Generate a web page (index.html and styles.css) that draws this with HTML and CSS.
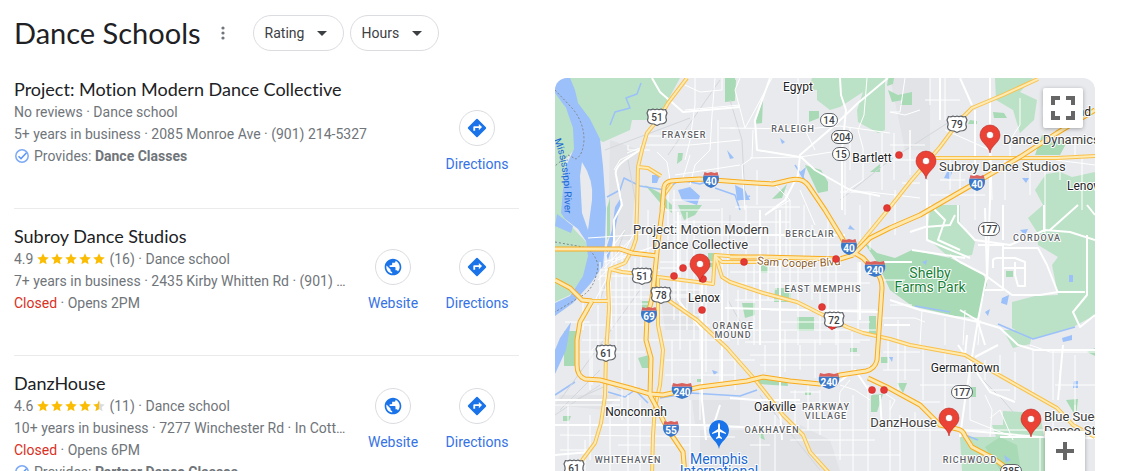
FILE: index.html
```html
<!DOCTYPE html>
<html lang="en">
<head>
	<meta charset="UTF-8">
	<title>Dance Schools</title>
	<link rel="stylesheet" href="styles.css">
</head>
<body>

<!-- shared icons -->
<svg class="sprite" aria-hidden="true">
	<symbol id="i-web" viewBox="0 0 24 24"><path d="M12 2C6.500 2 2 6.500 2 12s4.500 10 10 10 10-4.500 10-10S17.500 2 12 2zm-1 17.900C7.100 19.400 4 16.100 4 12c0-.6.100-1.200.2-1.800L9 15v1c0 1.100.9 2 2 2v1.900zm6.900-2.500c-.3-.8-1-1.400-1.900-1.400h-1v-3c0-.6-.4-1-1-1H8v-2h2c.6 0 1-.4 1-1V7h2c1.100 0 2-.9 2-2v-.4c2.900 1.200 5 4.100 5 7.400 0 2.100-.8 4-2.100 5.400z"/></symbol>
	<symbol id="i-dir" viewBox="0 0 24 24"><path d="M21.700 11.300l-9-9a1 1 0 0 0-1.400 0l-9 9a1 1 0 0 0 0 1.400l9 9a1 1 0 0 0 1.400 0l9-9a1 1 0 0 0 0-1.400zM14 14.500V12h-4v3H8v-4c0-.6.400-1 1-1h5V7.500l3.500 3.500-3.500 3.500z"/></symbol>
	<symbol id="i-check" viewBox="0 0 16 16"><circle cx="8" cy="8" r="6.200" fill="none" stroke="#7baaf7" stroke-width="1.500"/><path d="M4.500 8.200l2.500 2.400 5.500-5.800" fill="none" stroke="#5e97f6" stroke-width="1.500"/></symbol>
	<symbol id="i-star" viewBox="0 0 12 12"><path d="M6 .3l1.700 3.800 4.100.4-3.100 2.700.9 4.100L6 9.200l-3.600 2.100.9-4.100L.2 4.500l4.100-.4z"/></symbol>
	<symbol id="i-half" viewBox="0 0 12 12"><path d="M6 .3l1.700 3.800 4.100.4-3.100 2.700.9 4.100L6 9.200z" fill="#dadce0"/><path d="M6 .3v8.900l-3.600 2.100.9-4.100L.2 4.500l4.100-.4z"/></symbol>
</svg>

<div class="page">
	<header class="head">
		<h1>Dance Schools</h1>
		<button class="more" aria-label="More options">
			<svg width="4" height="14" viewBox="0 0 4 14"><circle cx="2" cy="2" r="1.600"/><circle cx="2" cy="7" r="1.600"/><circle cx="2" cy="12" r="1.600"/></svg>
		</button>
		<div class="filter">
			<select aria-label="Rating"><option>Rating</option></select>
			<svg width="10" height="5" viewBox="0 0 10 5"><path d="M0 0h10L5 5z"/></svg>
		</div>
		<div class="filter">
			<select aria-label="Hours"><option>Hours</option></select>
			<svg width="10" height="5" viewBox="0 0 10 5"><path d="M0 0h10L5 5z"/></svg>
		</div>
	</header>

	<main class="cols">
		<div class="list">
			<article class="item">
				<div class="info">
					<h2>Project: Motion Modern Dance Collective</h2>
					<p>No reviews · Dance school</p>
					<p>5+ years in business · 2085 Monroe Ave · (901) 214-5327</p>
					<p class="provides"><svg width="16" height="16"><use href="#i-check"/></svg><span>Provides: <b>Dance Classes</b></span></p>
				</div>
				<nav class="acts low">
					<a href="#"><span class="ring"><svg width="22" height="22"><use href="#i-dir"/></svg></span>Directions</a>
				</nav>
			</article>
			<article class="item">
				<div class="info">
					<h2>Subroy Dance Studios</h2>
					<p class="rate"><span>4.9</span><span class="stars" role="img" aria-label="Rated 4.9"><svg><use href="#i-star"/></svg><svg><use href="#i-star"/></svg><svg><use href="#i-star"/></svg><svg><use href="#i-star"/></svg><svg><use href="#i-star"/></svg></span><span>(16) · Dance school</span></p>
					<p>7+ years in business · 2435 Kirby Whitten Rd · (901) …</p>
					<p><span class="closed">Closed</span> · Opens 2PM</p>
				</div>
				<nav class="acts mid">
					<a href="#"><span class="ring"><svg width="20" height="20"><use href="#i-web"/></svg></span>Website</a>
					<a href="#"><span class="ring"><svg width="22" height="22"><use href="#i-dir"/></svg></span>Directions</a>
				</nav>
			</article>
			<article class="item">
				<div class="info">
					<h2>DanzHouse</h2>
					<p class="rate"><span>4.6</span><span class="stars" role="img" aria-label="Rated 4.6"><svg><use href="#i-star"/></svg><svg><use href="#i-star"/></svg><svg><use href="#i-star"/></svg><svg><use href="#i-star"/></svg><svg><use href="#i-half"/></svg></span><span>(11) · Dance school</span></p>
					<p>10+ years in business · 7277 Winchester Rd · In Cott…</p>
					<p><span class="closed">Closed</span> · Opens 6PM</p>
					<p class="provides"><svg width="16" height="16"><use href="#i-check"/></svg><span>Provides: <b>Partner Dance Classes</b></span></p>
				</div>
				<nav class="acts">
					<a href="#"><span class="ring"><svg width="20" height="20"><use href="#i-web"/></svg></span>Website</a>
					<a href="#"><span class="ring"><svg width="22" height="22"><use href="#i-dir"/></svg></span>Directions</a>
				</nav>
			</article>
		</div>

		<div class="map">
			<svg class="canvas" viewBox="555 78 540 393" preserveAspectRatio="xMinYMin slice" role="img" aria-label="Map of Memphis">
				<defs>
					<g id="roads-big">
						<path d="M662 210L664 187Q665 182 671 181L683 180 700 179 740 182 773 184 790 180Q802 177 808 185L825 210 842 238 848 249 863 258 876 272Q882 278 882 288L878 345 877 360Q875 369 866 371L840 375 820 384 790 381 763 377 747 381 700 387 663 395 650 394 630 388 600 380 585 379Q577 376 577 365L577 340 580 322 592 301"/>
						<path d="M663 205L658 242 655 272 652 298 647 318 646 340 651 358 650 395 657 408 667 428 683 452 685 475"/>
						<path d="M555 249H620L632 253 657 256"/>
						<path d="M555 280L570 288 582 300 592 301"/>
						<path d="M853 255L870 238 890 228 920 215 977 182 1020 157 1057 133 1095 110"/>
						<path d="M868 378L887 387 920 405 940 425 957 429Q963 430 965 436L972 447 993 458 1015 474"/>
						<path d="M730 257L763 257 840 259 853 255"/>
					</g>
					<g id="roads-mid">
						<path d="M687 78L668 103 660 117 647 133 642 150 638 167 637 210 636 239 633 248 625 263"/>
						<path d="M638 167L648 168 661 176M664 195L672 184"/>
						<path d="M625 263L610 269 608 283 609 309 606 353 605 396 601 423 595 443 583 459 576 471"/>
						<path d="M592 301H608M610 269L622 272 640 274 658 277 713 284 715 255 740 257M715 256L722 262 760 262"/>
						<path d="M658 277V325L663 350 660 385 655 407 653 435 652 475"/>
						<path d="M661 292L668 300 697 320 712 334 727 348 757 382 783 415 803 435 810 452 830 474"/>
						<path d="M716 258L722 277 730 282 763 293 797 302 823 315 847 327 863 333 890 339 910 345 943 351 965 355 990 370 1020 387 1057 408 1073 425 1095 437"/>
						<path d="M855 250L887 211 910 182 940 147 960 120 972 108 1003 95 1038 79M923 157L937 158H1057L1095 156"/>
					</g>
					<g id="us"><path d="M-8.500-7.500Q-6-6.500-4-8-2-6.800 0-8 2-6.800 4-8 6-6.500 8.500-7.500L10-4Q8 0 9.500 3 9 7 3 7L0 8.500-3 7Q-9 7-9.500 3-8 0-10-4Z" fill="#fff" stroke="#5f6368" stroke-width="1.200"/></g>
					<g id="oval"><rect x="-8.500" y="-6.500" width="17" height="13" rx="6.500" fill="#fff" stroke="#5f6368"/></g>
					<g id="oval-l"><rect x="-10.500" y="-6.500" width="21" height="13" rx="6.500" fill="#fff" stroke="#5f6368"/></g>
					<g id="inter"><path d="M-7.500-4.500C-9 1-7 6 0 8 7 6 9 1 7.500-4.500Z" fill="#3b78c9"/><path d="M-7.500-4.500L-6.500-8-3.500-7 0-8 3.500-7 6.500-8 7.500-4.500Z" fill="#d9605d"/></g>
					<g id="inter-l"><path d="M-10-4.500C-11 1-9 6 0 8 9 6 11 1 10-4.500Z" fill="#3b78c9"/><path d="M-10-4.500L-9-8-5-7 0-8 5-7 9-8 10-4.500Z" fill="#d9605d"/></g>
					<g id="pin"><path d="M0 18C-1 10-10 8-10 0A10 10 0 0 1 10 0C10 8 1 10 0 18Z"/><circle r="3.600" fill="#fff"/></g>
				</defs>

				<rect class="land" x="555" y="78" width="540" height="400"/>
				<path class="urban" d="M610 140L640 150 630 240 608 240ZM890 78H930V150H905ZM560 395H620L605 410 555 405ZM692 400H740V425H695ZM700 430H800L800 471H700ZM800 425L830 440 840 471H800ZM660 290H700V330H665Z"/>

				<!-- parks -->
				<g class="park">
					<path d="M566 78H680L668 100 657 120 632 120 630 130 603 142 590 135 575 100Z"/>
					<path d="M555 90L566 108 575 128 575 149 566 159 555 162Z"/>
					<path d="M555 160L566 160 563 189 565 219 573 228 586 242 589 256 584 276 570 295 555 302Z"/>
					<path d="M812 78H885V130L878 133 858 122 857 110 863 92 840 107 830 110 817 100V90L808 90Z"/>
					<path d="M995 78H1033L1020 92 1037 100 1034 120 1020 133 1013 110 996 100Z"/>
					<path d="M1035 190L1046 174 1060 172 1072 177 1095 172V315L1073 327 1033 339 1012 328V302L1035 296 1058 295 1052 265 1058 257 1038 245 1037 232 1028 218 1043 205Z"/>
					<path d="M930 208L940 205H960V222L975 242 972 255 950 258 927 238Z"/>
					<path d="M1003 411L1040 413 1044 437H1060V471H962L960 437 996 437 992 425 1003 425Z"/>
					<path d="M1003 330H1033L1030 344 1013 348Z"/>
				</g>
				<g class="park-d">
					<path d="M863 241L877 253 895 258 912 250 950 258 983 274 987 284 978 318 955 316 912 306 890 290 877 262Z"/>
					<path d="M725 78H735V101L725 102ZM730 78L736 80 735 100 730 101ZM763 99L755 124 762 123ZM805 165L821 170 828 182V191L818 193ZM772 199L787 184 782 198ZM809 111H819V118L809 122ZM870 172L880 164V172ZM888 90L898 95 912 92V105L900 105 903 100 892 102ZM888 78H894L893 84 887 86ZM970 120L977 121V124L968 124ZM993 112L1004 113 1007 118 994 118ZM1042 135L1052 140 1068 140 1060 155 1035 155ZM678 153H683L682 160 677 164ZM645 185L660 193 672 205V213L662 205Z"/>
					<path d="M642 301H652V310H642ZM708 253H715V270L708 268ZM678 205H702L695 215 684 220ZM638 358L649 355 650 368 642 368ZM564 331H577V366H564ZM563 416H571L569 421 563 421ZM761 265H768V273H761ZM775 288H791V302H774ZM797 317H814V331H797ZM869 316H876V334H869ZM742 303H755V315L745 318ZM757 379H787L788 386 760 384ZM805 392H811V395H805ZM850 348H857V352H850ZM881 357H888V363H881ZM871 395L883 394 877 412H871ZM897 383H907L903 393ZM1066 400L1078 399 1076 417ZM985 447L1000 437 1017 445 1020 465 1000 470ZM970 387H976V397H970ZM697 379H703V382H697ZM607 208L610 198 610 235 607 240ZM1006 271H1013V277H1006ZM758 433L763 434 765 440 760 438ZM1087 352L1095 348V356Z"/>
				</g>

				<!-- water -->
				<path class="water" d="M555 78H570L575 90 578 103 590 119 600 139 603 166 606 209 605 243 603 266 591 283 573 303 555 316V303L570 296 583 276 588 256 586 241 578 229 565 219 561 213 563 189 566 166 574 149 573 128 566 108 555 93Z"/>
				<path class="island" d="M582 162Q594 180 592 200L588 230 582 213 580 176Z"/>
				<path class="water" d="M571 322L566 350 555 374V350L560 338ZM557 214L573 226 571 233 555 226ZM615 207L622 196 616 225 611 250 608 260 605 252 612 230ZM678 190L690 187 700 196 697 205 682 200ZM652 175H660L657 183H652ZM727 150L734 158 730 159ZM735 185L745 190 750 200 737 200ZM780 138L785 142 782 144ZM800 172L806 167 803 180ZM1020 230L1028 229 1025 235ZM1069 275H1073V282H1069ZM1002 298L1009 295 1007 305 1001 303ZM985 312L990 309 988 316ZM922 262L927 260 926 265ZM947 172H952L950 179 944 178ZM1022 178L1029 178 1026 183ZM850 225L855 230 848 229ZM1074 381H1078V388H1073ZM1062 338L1072 335V340L1063 342ZM1004 455L1011 460 1006 462ZM889 357L893 357 892 362ZM712 370L718 372 714 375ZM1083 110L1087 108 1085 113Z"/>
				<path class="creek" d="M610 125L615 112 630 108 626 98 637 94 641 83M607 197L620 190 624 178 640 186 665 190 680 180 700 184 718 178M555 395L575 382M608 392L625 397 635 390 648 403M660 398L690 393 740 396 757 390M715 188L735 195 740 210M915 306L950 312M998 324L1033 339 1075 327M738 200L750 196M960 433L978 440M795 165L808 185"/>
				<path class="border" d="M555 90L572 108Q584 122 584 140 583 155 576 159L568 155 555 166M555 242L583 247Q594 250 598 265 596 285 585 294L555 312"/>

				<!-- small streets -->
				<path class="rail" d="M605 150L690 118M730 100L742 140 745 200M668 155L720 80M840 200L890 160 960 115M628 160L638 215M575 400L610 384 620 390 640 388M760 395L820 470 M975 372L1003 400 1013 412M640 290L560 400M600 370L560 410M555 415L600 385M625 230L600 300M730 215L728 300 750 340"/>
				<g class="street">
					<path d="M610 272L612 330M616 250V350M622 245V420M629 255V370M635 258V390M641 250V300M648 210V256M668 186V240M674 190V320M680 215V350M687 212V330M694 220V340M700 285V360M706 280V372M722 208V300M728 230V330M738 290V345M746 205V300M754 262V345M768 228V300M776 210V290M790 200V300M798 262V345M804 205V260M812 225V300M820 260V345M828 215V310M836 260V345M858 262V330"/>
					<path d="M600 270H660M600 276H655M600 290H700M605 297H700M606 304H652M606 315H700M584 325H650M582 340H730M580 352H645M660 262H715M660 268H715M660 295H720M660 325H710M660 210H720M675 222H790M700 235H770M720 245H840M672 200H720M735 207H800M730 272H860M736 283H870M735 300H790M770 310H876M780 322H870M735 330H876M745 342H860M890 305H912"/>
					<path d="M588 238L650 234M604 262L660 245M606 255L625 230M604 268L632 238M612 262L655 246M598 280L625 250 637 228M612 250L612 272M606 245L606 290M600 262L600 300M590 310L612 268M583 300V330"/>
					<path d="M590 325V390M598 305V345L592 350V385M565 322H590M560 435L735 437M555 405H620M568 405V471M585 440V471M590 415V460M610 405V471M628 395V471M640 400V471M560 425H650M560 450H590M605 460H655M618 445H690M655 425H720M690 400V471M700 385V420M672 340V385M690 340V388M720 350V385M735 360V390M665 360H755M665 375H735"/>
					<path d="M640 145H690L740 140M657 152L667 162 670 180M690 155L683 178M695 78V105L690 140 685 160M715 78L712 115 710 150 695 165 690 185M722 78V90L700 92 685 85M735 128H720M645 136H690M628 145V150H650M675 175L740 165M718 120V175M685 110L740 105M627 153L640 148M614 170L620 160 640 150"/>
				</g>
				<g class="street">
					<path d="M740 78L735 90 745 128 755 110 772 78M730 128L805 129 840 126 890 133M798 78V128M750 158L800 157 838 151M753 130L752 158 742 165 745 210M805 130L815 150M770 180L790 200 765 215M757 170V205M786 190V255M800 190L815 225M905 78L900 112 890 112M890 112L905 115 920 110M882 133V190M894 133V180M902 183H920M910 130V160M867 78L864 115 858 130 863 148V180L845 192M850 128V170M890 145H925M895 160H920M840 192H870L920 198M845 160V215M860 205V245"/>
					<path d="M930 78V105M945 78V120M925 100H960M950 160V190M990 78V110L992 200M1005 160V200M1020 98V125L1010 140V160M975 170V220M960 165V190M940 180H965M1030 165V195M1045 165V235M1060 165V180M930 195H985M895 190V235M870 195V250M910 130V175M945 130L990 150M1075 140V156M1082 157V210M1056 160L1095 165"/>
					<path d="M883 280H905M878 318H915L925 322M922 310L920 345M945 318V345M898 320V390M883 352H920M883 370H920M888 340V370M905 345V380M923 345V400M945 350V410M965 310L963 345M980 320L978 345M890 400V471M900 415V471M915 412V471M930 420V471M885 430H1095M840 385L855 390 870 400M850 380L840 392 838 420M880 390L895 400 890 410M820 390V435M808 385V430M795 390V425M760 400V471M775 415V471M840 400V460M853 395V471M868 385V471M790 392H820M780 405L820 402M770 430H880M750 445H770M790 440H875M815 455H900M765 345V372M785 330V372M800 345V370M815 340V378M838 330V372M852 332V370M750 355H860M760 365H870M780 340H870"/>
					<path d="M985 360V380M1000 355V375M1015 352V400M1033 350V392M1053 350V400M1075 355V420M1095 352H1050L1030 345M1040 437V471M1053 412V437M1075 405V455M985 395L992 410 990 437M990 418L1000 410 1013 440M920 385H960M920 402H940M970 365V420L1013 437M990 390H1010M1055 385H1095M1060 370V390"/>
				</g>
				<g class="avenue">
					<path d="M652 78L660 92 683 112 740 107M614 250V220L622 205 616 175Q614 168 625 160L640 150M888 78L858 103 835 125 800 155 798 175 785 200 765 215M840 78L841 95 846 110 842 150V210M770 78L755 120 757 150 800 157M801 157L815 170 850 190 880 196M678 212V300L702 330V400L706 440M702 280V380M722 290V385M760 210V345M735 235H845M725 308L880 312M884 262H912M884 325H910M780 210V410L782 440M860 262V320M555 400H620M555 425H700L800 430M555 455L590 452M800 400H755L730 398M720 405L712 430M835 385L855 370 872 395M927 180V240L970 258M910 232L925 227 950 225 955 215M912 250L965 258M950 255L960 262 985 275 1012 295 1040 295 1058 292 1085 292"/>
					<path d="M985 208L987 275 978 320 965 400 960 437M990 78V200L989 230 987 280M958 205V222L975 240 1010 245 1022 240 1045 230 1070 232 1095 240M978 245H1003L1003 290 985 290M1003 248H1038L1047 265 1058 293M1003 205V240M993 268V260Q994 258 998 258H1015L1025 262V286L1018 286 1015 275V262M1002 268H1025M1044 205V232M1050 230L1078 205M1087 205L1095 215M1087 235V295L1073 312 1080 327 1095 315M960 310L980 322 1000 328 1018 345 1035 350H1095M890 300L920 310 960 318 978 322 985 345M930 205L945 220 938 240 960 250M940 78V120M960 78L972 105M975 110V190M958 345L965 355 967 335M967 357L975 370 990 392 1015 402M1000 437H1043M998 345L975 357M1063 345L1058 400M880 395L882 430M960 430L1040 437 1095 438M1060 440V471"/>
				</g>

				<!-- highways: casing first, then the lighter core -->
				<use href="#roads-mid" class="case-m"/><use href="#roads-mid" class="core-m"/>
				<use href="#roads-big" class="case-b"/><use href="#roads-big" class="core-b"/>

				<!-- road shields -->
				<g class="num">
					<use href="#us" x="657" y="117"/><text x="657" y="121">51</text>
					<use href="#us" x="642" y="276"/><text x="642" y="280">51</text>
					<use href="#us" x="661" y="295"/><text x="661" y="299">78</text>
					<use href="#us" x="606" y="353"/><text x="606" y="357">61</text>
					<use href="#us" x="574" y="468"/><text x="574" y="472">61</text>
					<use href="#us" x="957" y="124"/><text x="957" y="128">79</text>
					<use href="#us" x="834" y="320"/><text x="834" y="324">72</text>
					<use href="#oval" x="829" y="120"/><text x="829" y="124">14</text>
					<use href="#oval-l" x="842" y="137"/><text x="842" y="141">204</text>
					<use href="#oval" x="841" y="154"/><text x="841" y="158">15</text>
					<use href="#oval-l" x="989" y="229"/><text x="989" y="233">177</text>
					<use href="#oval-l" x="962" y="392"/><text x="962" y="396">177</text>
					<use href="#oval-l" x="1011" y="471"/><text x="1011" y="475">385</text>
				</g>
				<g class="num inter">
					<use href="#inter" x="711" y="180"/><text x="711" y="185">40</text>
					<use href="#inter" x="977" y="183"/><text x="977" y="188">40</text>
					<use href="#inter" x="849" y="247"/><text x="849" y="252">40</text>
					<use href="#inter-l" x="875" y="269"/><text x="875" y="274">240</text>
					<use href="#inter" x="649" y="315"/><text x="649" y="320">69</text>
					<use href="#inter-l" x="682" y="391"/><text x="682" y="396">240</text>
					<use href="#inter" x="671" y="429"/><text x="671" y="434">55</text>
					<use href="#inter-l" x="829" y="381"/><text x="829" y="386">240</text>
				</g>

				<!-- place names -->
				<g class="area">
					<text x="684" y="138">FRAYSER</text>
					<text x="793" y="132">RALEIGH</text>
					<text x="810" y="237">BERCLAIR</text>
					<text x="823" y="292">EAST MEMPHIS</text>
					<text x="1037" y="241">CORDOVA</text>
					<text x="733" y="329">ORANGE</text><text x="733" y="338">MOUND</text>
					<text x="826" y="410">PARKWAY</text><text x="826" y="419">VILLAGE</text>
					<text x="772" y="433">OAKHAVEN</text>
					<text x="628" y="463">WHITEHAVEN</text>
					<text x="970" y="463">RICHWOOD</text>
				</g>
				<g class="town">
					<text x="798" y="91">Egypt</text>
					<text x="872" y="162">Bartlett</text>
					<text x="704" y="302">Lenox</text>
					<text x="636" y="416">Nonconnah</text>
					<text x="775" y="411">Oakville</text>
					<text x="965" y="372">Germantown</text>
					<text class="start" x="1067" y="190">Lenow</text>
					<text class="end" x="1091" y="116">Lakeland</text>
				</g>
				<g class="green"><text x="930" y="278">Shelby</text><text x="930" y="292">Farms Park</text></g>
				<path id="sam" d="M757 264Q795 270 850 264" fill="none"/>
				<path id="mis" d="M554 140Q567 170 564 225" fill="none"/>
				<text class="road-name"><textPath href="#sam">Sam Cooper Blvd</textPath></text>
				<text class="river-name"><textPath href="#mis">Mississippi River</textPath></text>
				<g class="blue"><text x="719" y="464">Memphis</text><text x="719" y="476">International</text></g>

				<!-- other results -->
				<g class="dots">
					<circle cx="674" cy="276" r="3.500"/><circle cx="683" cy="268" r="3.500"/><circle cx="703" cy="279" r="3.500"/>
					<circle cx="702" cy="310" r="3.500"/><circle cx="744" cy="262" r="3.500"/><circle cx="836" cy="259" r="3.500"/>
					<circle cx="887" cy="208" r="3.500"/><circle cx="899" cy="155" r="3.500"/><circle cx="822" cy="307" r="3.500"/>
					<circle cx="872" cy="390" r="3.500"/><circle cx="884" cy="390" r="3.500"/><path d="M828 327H836L832 330Z"/>
				</g>
				<g class="pins">
					<use href="#pin" x="700" y="264"/><use href="#pin" x="926" y="161"/><use href="#pin" x="990" y="135"/>
					<use href="#pin" x="949" y="418"/><use href="#pin" x="1031" y="419"/>
				</g>
				<g class="air">
					<path d="M719 449C718 441 709 439 709 430A10 10 0 0 1 729 430C729 439 720 441 719 449Z"/>
					<path d="M718 429V425Q719 421 720 425V429L726 433V434L720 432V436L722 438V439L719 438 716 439V438L718 436V432L712 434V433Z" fill="#fff"/>
				</g>
				<g class="place">
					<text class="mid" x="701" y="234">Project: Motion Modern</text>
					<text class="mid" x="700" y="249">Dance Collective</text>
					<text x="1003" y="144">Dance Dynamics</text>
					<text x="939" y="171">Subroy Dance Studios</text>
					<text class="end" x="937" y="427">DanzHouse</text>
					<text x="1044" y="421">Blue Suede</text>
					<text x="1044" y="435">Dance Studio</text>
				</g>
			</svg>
			<button class="ctl full" aria-label="Full screen">
				<svg width="24" height="24" viewBox="0 0 24 24"><path d="M2 9V2H9M15 2H22V9M22 15V22H15M9 22H2V15"/></svg>
			</button>
			<div class="zoom">
				<button class="ctl" aria-label="Zoom in"><svg width="18" height="18" viewBox="0 0 18 18"><path d="M9 0V18M0 9H18"/></svg></button>
				<button class="ctl" aria-label="Zoom out"><svg width="18" height="18" viewBox="0 0 18 18"><path d="M0 9H18"/></svg></button>
			</div>
		</div>
	</main>
</div>

</body>
</html>
```
FILE: styles.css
```css
body{
    margin: 0;
    background: #fff;
    color: #70757a;
    font-family: Roboto, "Liberation Sans", sans-serif;
    font-size: 14px;
}
h1, h2, p{
    margin: 0;
    font-weight: 400;
}
h1, h2{
    font-family: Lato, sans-serif;
    font-variant-ligatures: none;
    color: #202124;
}
button{
    padding: 0;
    border: 0;
    background: none;
    cursor: pointer;
}
a{
    text-decoration: none;
    color: #3572e6;
}
.sprite{
    position: absolute;
    width: 0;
    height: 0;
}
.page{
    display: flex;
    flex-direction: column;
    height: 100vh;
    overflow: hidden;
}

/* header */
.head{
    display: flex;
    align-items: center;
    gap: 6px;
    padding: 15px 14px 11px;
}
h1{
    font-size: 29px;
    line-height: 36px;
}
.more{
    display: flex;
    justify-content: center;
    width: 32px;
    margin-right: 8px;
    fill: #70757a;
}
.filter{
    display: grid;
    align-items: center;
    color: #3c4043;
}
.filter select{
    grid-area: 1 / 1;
    appearance: none;
    height: 36px;
    padding: 0 38px 0 11px;
    border: 1px solid #dadce0;
    border-radius: 18px;
    background: #fff;
    color: #3c4043;
    font: 14px Roboto, sans-serif;
}
.filter svg{
    grid-area: 1 / 1;
    justify-self: end;
    margin-right: 17px;
    fill: #3c4043;
    pointer-events: none;
}

/* columns */
.cols{
    display: grid;
    grid-template-columns: 505fr 540fr;
    grid-template-rows: minmax(0, 1fr);
    gap: 36px;
    flex: 1;
    min-height: 0;
    padding: 0 28px 0 14px;
}
.item{
    display: flex;
    min-height: 146px;
    border-bottom: 1px solid #ebebeb;
}
.info{
    flex: 1;
    min-width: 0;
    padding-top: 16px;
}
.info h2{
    font-size: 18px;
    line-height: 23px;
}
.info p{
    line-height: 22px;
    white-space: nowrap;
}
.info .provides, .info .rate, .stars{
    display: flex;
    align-items: center;
}
.info .provides, .info .rate{
    gap: 4px;
}
.stars{
    gap: 2px;
    fill: #fbbc04;
}
.stars svg{
    width: 12px;
    height: 12px;
}
.closed{
    color: #d93025;
}
.acts{
    display: flex;
    align-items: flex-start;
    padding-top: 32px;
}
.acts.mid{
    padding-top: 40px;
}
.acts.low{
    padding-top: 48px;
}
.acts a{
    display: flex;
    flex-direction: column;
    align-items: center;
    gap: 8px;
    width: 84px;
    line-height: 20px;
}
.ring{
    display: flex;
    align-items: center;
    justify-content: center;
    box-sizing: border-box;
    width: 36px;
    height: 36px;
    border: 1px solid #dadce0;
    border-radius: 50%;
    fill: #1a73e8;
}

/* map */
.map{
    position: relative;
    margin-top: 16px;
    border-radius: 12px 12px 0 0;
    overflow: hidden;
}
.canvas{
    display: block;
    width: 100%;
    height: 100%;
    font-family: Roboto, sans-serif;
}
.canvas path{
    stroke-linejoin: round;
}
.land{
    fill: #e8eaed;
}
.urban{
    fill: #e1e3e6;
}
.island{
    fill: #e8eaed;
}
.park{
    fill: #bbe2c6;
}
.park-d{
    fill: #a8dab5;
}
.water{
    fill: #9cc0f9;
}
.creek, .border, .rail, .street, .avenue, .case-b, .core-b, .case-m, .core-m{
    fill: none;
}
.creek{
    stroke: #9cc0f9;
    stroke-width: 1.5;
}
.border{
    stroke: #80868b;
    stroke-dasharray: 2 2;
}
.rail{
    stroke: #d3d6da;
}
.street{
    stroke: #fff;
    stroke-width: 1;
}
.avenue{
    stroke: #fff;
    stroke-width: 2;
}
.case-b{
    stroke: #f9ab1d;
    stroke-width: 5;
}
.core-b{
    stroke: #fde9b0;
    stroke-width: 3;
}
.case-m{
    stroke: #fac14a;
    stroke-width: 4;
}
.core-m{
    stroke: #fdeab5;
    stroke-width: 2;
}
.num{
    font-size: 10px;
    font-weight: 500;
    fill: #3c4043;
    text-anchor: middle;
}
.inter{
    font-weight: 700;
    fill: #fff;
}
.area, .town, .green, .blue, .road-name, .place{
    paint-order: stroke;
    stroke: #fff;
    stroke-width: 2px;
    stroke-linejoin: round;
}
.area{
    font-size: 9px;
    font-weight: 500;
    letter-spacing: 1px;
    fill: #5f6368;
    text-anchor: middle;
}
.town{
    font-size: 12px;
    fill: #202124;
    text-anchor: middle;
}
.town .start{
    text-anchor: start;
}
.place{
    font-size: 13px;
    fill: #3c3c3c;
}
.place .mid{
    text-anchor: middle;
}
.place .end, .town .end{
    text-anchor: end;
}
.green{
    font-size: 14px;
    fill: #188038;
    text-anchor: middle;
}
.blue{
    font-size: 14px;
    fill: #1967d2;
    text-anchor: middle;
}
.road-name{
    font-size: 11px;
    fill: #8a5a1c;
}
.river-name{
    font-size: 10px;
    fill: #1967d2;
}
.dots{
    fill: #e53935;
    stroke: #c5221f;
    stroke-width: .5px;
}
.pins{
    fill: #ea4335;
    stroke: #b31412;
    stroke-width: .5px;
}
.air{
    fill: #1a73e8;
}
.ctl{
    display: flex;
    align-items: center;
    justify-content: center;
    width: 40px;
    height: 40px;
    background: #fff;
    fill: none;
    stroke: #666;
    stroke-width: 4;
}
.full{
    position: absolute;
    top: 10px;
    right: 12px;
    border-radius: 2px;
    box-shadow: 0 1px 4px rgba(0, 0, 0, .3);
}
.zoom{
    position: absolute;
    right: 10px;
    bottom: -40px;
    border-radius: 2px;
    box-shadow: 0 1px 4px rgba(0, 0, 0, .3);
}
.zoom .ctl + .ctl{
    border-top: 1px solid #e6e6e6;
}
```
